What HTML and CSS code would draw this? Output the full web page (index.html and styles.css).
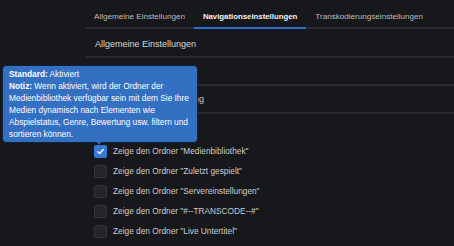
FILE: index.html
```html
<!DOCTYPE html>
<html lang="de">
<head>
  <meta charset="UTF-8" />
  <title>Einstellungen</title>
  <link rel="stylesheet" href="styles.css">
</head>
<body>

  <div class="content">
    <!-- Tabs -->
    <div class="tabs">
      <div class="tab">Allgemeine Einstellungen</div>
      <div class="tab active">Navigationseinstellungen</div>
      <div class="tab">Transkodierungseinstellungen</div>
    </div>

    <div class="row title">Allgemeine Einstellungen</div>
    <div class="row"></div>
    <div class="row">Ordneransicht Gruppierung</div>
    <div class="subhead"></div>

    <div class="options">
      <label class="option"><span class="check on"><svg viewBox="0 0 12 12"><polyline points="3,6.2 5.1,8.2 9,3.9" /></svg></span>Zeige den Ordner "Medienbibliothek"</label>
      <label class="option"><span class="check"></span>Zeige den Ordner "Zuletzt gespielt"</label>
      <label class="option"><span class="check"></span>Zeige den Ordner "Servereinstellungen"</label>
      <label class="option"><span class="check"></span>Zeige den Ordner "#--TRANSCODE--#"</label>
      <label class="option"><span class="check"></span>Zeige den Ordner "Live Untertitel"</label>
    </div>
  </div>

  <!-- Tooltip -->
  <div class="tooltip">
    <b>Standard:</b> Aktiviert<br>
    <b>Notiz:</b> Wenn aktiviert, wird der Ordner der Medienbibliothek verfügbar sein mit dem Sie Ihre Medien dynamisch nach Elementen wie Abspielstatus, Genre, Bewertung usw. filtern und sortieren können.
  </div>

</body>
</html>
```

FILE: styles.css
```css
body {
  margin: 0;
  background: #17181b;
  font-family: 'Liberation Sans', Arial, sans-serif;
  color: #d0d0d0;
  height: 246px;
  overflow: hidden;
}

.content {
  margin-left: 85px;
}

.tabs {
  display: flex;
  border-bottom: 2px solid #2a2b2f;
  height: 27px;
}

.tab {
  padding: 12px 9px 0;
  font-size: 8.1px;
  line-height: 10px;
  color: #bdbdbd;
}

.tab.active {
  color: #f4f4f4;
  font-weight: bold;
  font-size: 7.8px;
  border-bottom: 2px solid #2f6bd0;
  margin-bottom: -2px;
}

.row {
  height: 26px;
  line-height: 26px;
  padding-left: 10px;
  font-size: 9px;
  color: #c8c8c8;
  border-bottom: 2px solid #2a2b2f;
}

.row.title {
  height: 27px;
  line-height: 31px;
  color: #dadada;
}

.subhead {
  height: 26px;
}

.options {
  display: flex;
  flex-direction: column;
  padding-left: 9px;
  padding-top: 1px;
}

.option {
  display: flex;
  align-items: center;
  height: 20px;
  font-size: 8.3px;
  color: #cdcdcd;
}

.check {
  width: 11px;
  height: 11px;
  border-radius: 2px;
  background: #24252a;
  border: 1px solid #323338;
  margin-right: 6px;
  display: flex;
}

.check.on {
  background: #3877d6;
  border-color: #3877d6;
}

.check svg {
  width: 11px;
  height: 11px;
  fill: none;
  stroke: #fff;
  stroke-width: 1.6;
  stroke-linecap: round;
  stroke-linejoin: round;
}

.tooltip {
  position: absolute;
  left: 2px;
  top: 65px;
  width: 182px;
  height: 72px;
  padding: 2px 6px 2px 6px;
  background: #3470c2;
  border: 1px solid #142136;
  border-radius: 4px;
  color: #fff;
  font-size: 8.3px;
  line-height: 12px;
}

.tooltip::after {
  content: "";
  position: absolute;
  left: 94px;
  bottom: -3px;
  border-left: 2px solid transparent;
  border-right: 2px solid transparent;
  border-top: 3px solid #3470c2;
}
```
